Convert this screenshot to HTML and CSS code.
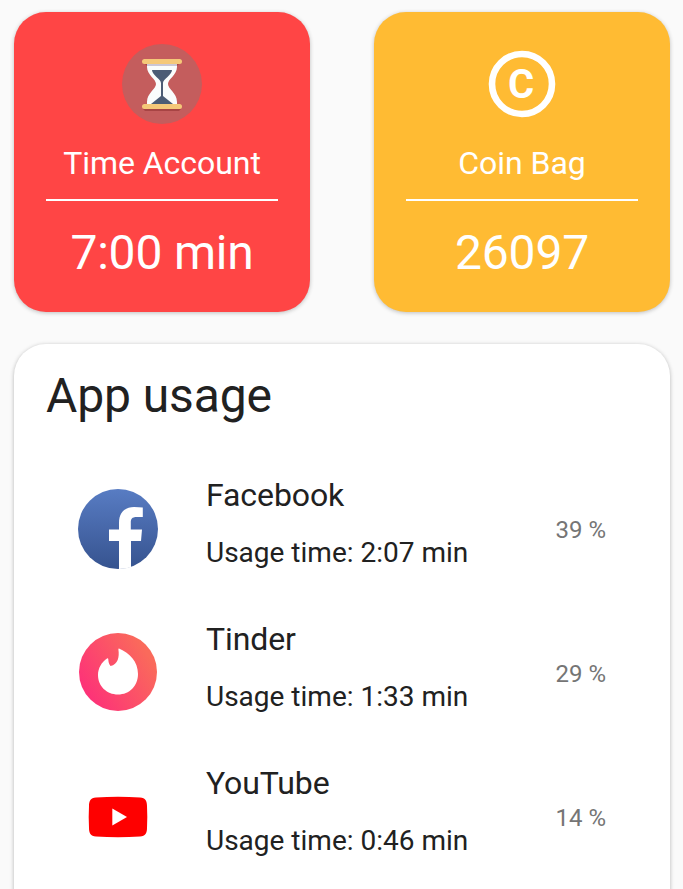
FILE: index.html
```html
<!DOCTYPE html>
<html lang="en">
<head>
<meta charset="utf-8">
<title>App usage</title>
<link rel="stylesheet" href="styles.css">
</head>
<body>
<main class="screen">
  <section class="summary">
    <article class="card card-time">
      <svg class="card-icon" viewBox="0 0 80 80">
        <circle cx="40" cy="40" r="40" fill="#c45d5d"/>
        <path d="M23 20h34l-2 2H25zM21 65h38l-2 2H23z" fill="#a74444"/>
        <path d="M25 18h30v5c0 8-9 12-9 17s9 9 9 18v3H25v-3c0-9 9-13 9-18s-9-9-9-17z" fill="#fafcfc"/>
        <path d="M25 19h30v3H25z" fill="#cbc6d5"/>
        <path d="M30 26h20c0 5-9 9-9 13v13l10 8H29l10-8V39c0-4-9-8-9-13z" fill="#4c5c75"/>
        <rect x="20" y="15" width="40" height="5" rx="2.5" fill="#f5c879"/>
        <rect x="20" y="60" width="40" height="5" rx="2.5" fill="#f5c879"/>
      </svg>
      <h2 class="card-label">Time Account</h2>
      <hr class="card-rule">
      <p class="card-value">7:00 min</p>
    </article>
    <article class="card card-coins">
      <svg class="card-icon" viewBox="0 0 80 80">
        <circle cx="40" cy="40" r="30" fill="none" stroke="#fff" stroke-width="6.6"/>
        <text class="coin-letter" x="39" y="54.300" text-anchor="middle">C</text>
      </svg>
      <h2 class="card-label">Coin Bag</h2>
      <hr class="card-rule">
      <p class="card-value">26097</p>
    </article>
  </section>
  <section class="usage">
    <h1 class="usage-title">App usage</h1>
    <ul class="apps">
      <li class="app">
        <svg class="app-icon" viewBox="0 0 80 80">
          <defs><linearGradient id="fb" x2="0" y2="1"><stop stop-color="#587cc3"/><stop offset="1" stop-color="#36538f"/></linearGradient></defs>
          <circle cx="40" cy="40" r="40" fill="url(#fb)"/>
          <path d="M41 80V52H31V40.500h10V34c0-10.500 6-16 15-16q5 0 8.800.5V28h-6c-5 0-6 2.200-6 5.500v7h11.200L63 52H53v26.300Q47 80 41 80z" fill="#fff"/>
        </svg>
        <div class="app-text"><h3 class="app-name">Facebook</h3><p class="app-time">Usage time: 2:07 min</p></div>
        <span class="app-share">39 %</span>
      </li>
      <li class="app">
        <svg class="app-icon" viewBox="0 0 80 80">
          <defs><linearGradient id="td" x1=".1" y1=".8" x2=".9" y2=".3"><stop stop-color="#fd3278"/><stop offset="1" stop-color="#fa6a5b"/></linearGradient></defs>
          <circle cx="40" cy="39" r="39" fill="url(#td)"/>
          <path d="M41 15.500C52 20 60 29 60 41c0 12-8.500 20.500-20 20.500S20 53 20 42c0-6.500 3.500-13 9-16.500q1.200-.5 1.300.8c.1 3 .7 5 2.200 6.700C40 31.500 41.500 24 40.400 16.500q0-1.200.6-1z" fill="#fff"/>
        </svg>
        <div class="app-text"><h3 class="app-name">Tinder</h3><p class="app-time">Usage time: 1:33 min</p></div>
        <span class="app-share">29 %</span>
      </li>
      <li class="app">
        <svg class="app-icon" viewBox="0 0 80 80">
          <path d="M18 20.500Q40 19 62 20.500C67.500 21 69 24 69 29q.6 11 0 22c0 5-1.500 8-7 8.500q-22 1.500-44 0C12.500 59 11 56 11 51q-.6-11 0-22c0-5 1.500-8 7-8.500z" fill="#fe0000"/>
          <path d="M34.300 31.500v17L49 40z" fill="#fff"/>
        </svg>
        <div class="app-text"><h3 class="app-name">YouTube</h3><p class="app-time">Usage time: 0:46 min</p></div>
        <span class="app-share">14 %</span>
      </li>
    </ul>
  </section>
</main>
</body>
</html>
```
FILE: styles.css
```css
* { box-sizing: border-box; }

body {
  margin: 0;
  background: #fafafa;
  color: #212121;
  font-family: Roboto, "Liberation Sans", sans-serif;
}

h1, h2, h3, p, ul { margin: 0; padding: 0; font-weight: 400; }

.screen {
  height: 889px;
  padding: 12px 13px 0 14px;
  overflow: hidden;
}

.summary {
  display: flex;
  justify-content: space-between;
  margin-bottom: 32px;
}

.card {
  display: flex;
  flex-direction: column;
  align-items: center;
  width: 296px;
  height: 300px;
  padding: 32px 32px 0;
  border-radius: 32px;
  color: #fff;
  box-shadow: 0 1px 4px rgba(0, 0, 0, .24);
}

.card-time { background: #ff4545; }
.card-coins { background: #ffbb33; }

.card-icon {
  flex: none;
  width: 80px;
  height: 80px;
}

.coin-letter {
  fill: #fff;
  font-size: 40px;
  font-weight: 700;
}

.card-label {
  margin-top: 20px;
  font-size: 32px;
  line-height: 38px;
  letter-spacing: -.05px;
}

.card-rule {
  width: 232px;
  height: 2px;
  margin: 17px 0 0;
  border: 0;
  background: #fff;
}

.card-value {
  margin-top: 24px;
  font-size: 48px;
  line-height: 56px;
  letter-spacing: -.2px;
}

.usage {
  height: 620px;
  padding: 23px 32px 0;
  border-radius: 32px;
  background: #fff;
  box-shadow: 0 1px 4px rgba(0, 0, 0, .28);
}

.usage-title {
  font-size: 48px;
  line-height: 58px;
  letter-spacing: -.1px;
}

.apps {
  padding: 32px 32px 0;
  list-style: none;
}

.app {
  display: flex;
  align-items: center;
  height: 144px;
}

.app-icon {
  flex: none;
  width: 80px;
  height: 80px;
}

.app-text {
  flex: 1;
  margin-left: 48px;
  padding-bottom: 13px;
  white-space: nowrap;
}

.app-name {
  font-size: 32px;
  line-height: 38px;
  letter-spacing: -.1px;
}

.app-time {
  margin-top: 22px;
  font-size: 28px;
  line-height: 33px;
}

.app-share {
  padding-top: 2px;
  color: #757575;
  font-size: 24px;
  line-height: 28px;
}
```
